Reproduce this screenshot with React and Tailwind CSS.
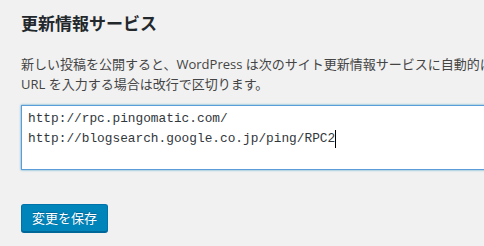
export default function App() {
  return (
    <div className="w-[484px] h-[246px] overflow-hidden bg-[#f1f1f1] font-['Open_Sans','Noto_Sans_CJK_JP',sans-serif]">
      <div className="pl-[21px] w-[900px]">
        {/* Section heading */}
        <h2 className="pt-[13px] text-[17px] leading-[22px] font-semibold text-[#23282d]">
          更新情報サービス
        </h2>

        {/* Description */}
        <p className="mt-[19px] text-[13px] leading-[20px] text-[#444] whitespace-nowrap">
          新しい投稿を公開すると、WordPress は次のサイト更新情報サービスに自動的に通知します。複数の
          <br />
          URL を入力する場合は改行で区切ります。
        </p>

        {/* Ping sites textarea (focused) */}
        <div className="mt-[11px] w-[600px] h-[65px] bg-white border border-[#5b9dd9] shadow-[0_0_2px_rgba(30,140,190,0.8)] px-[6px] pt-[3px] font-['Liberation_Mono',monospace] text-[12.8px] leading-[20px] text-[#32373c]">
          <div>http://rpc.pingomatic.com/</div>
          <div className="flex items-center">
            <span>http://blogsearch.google.co.jp/ping/RPC2</span>
            <span className="inline-block w-px h-[18px] bg-black" />
          </div>
        </div>

        {/* Submit */}
        <button className="mt-[34px] h-[28px] px-[10px] pb-px rounded-[3px] border border-[#0073aa] border-b-[#006799] bg-[#0085ba] shadow-[0_1px_0_#006799] text-[13px] leading-[26px] text-white [text-shadow:0_-1px_1px_#006799]">
          変更を保存
        </button>
      </div>
    </div>
  );
}
